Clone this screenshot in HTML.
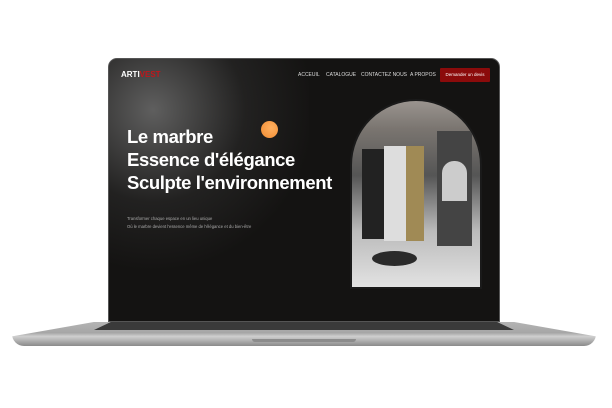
<html><head><style>
body{margin:0;width:612px;height:408px;background:#fff;position:relative;overflow:hidden;font-family:"Liberation Sans",sans-serif}
.scr{position:absolute;left:108px;top:58px;width:392px;height:264px;border-radius:9px 9px 0 0;background:#141312;overflow:hidden;border:1px solid #555;box-sizing:border-box}
.glow{position:absolute;left:-60px;top:-40px;width:260px;height:260px;background:radial-gradient(circle at 40% 35%,rgba(120,120,120,.75),rgba(60,60,60,.35) 40%,rgba(20,19,18,0) 70%)}
.logo{position:absolute;left:12px;top:11px;font-weight:bold;font-size:8px;color:#fff}
.nav{position:absolute;top:13px;font-size:5px;color:#ddd}
.btn{position:absolute;left:331px;top:9px;width:50px;height:14px;background:#8b0b0b;color:#fff;font-size:4.5px;text-align:center;line-height:14px;border-radius:1px}
h1{position:absolute;left:18px;top:66px;margin:0;color:#fff;font-size:18.5px;line-height:23px;font-weight:bold;letter-spacing:-.4px}
.sub{position:absolute;left:18px;top:156px;color:#aaa;font-size:4.2px;line-height:8px}
.dot{position:absolute;left:152px;top:62px;width:17px;height:17px;border-radius:50%;background:radial-gradient(circle at 60% 40%,#ffb060,#f08a30)}
.arch{position:absolute;left:241px;top:40px;width:132px;height:190px;border-radius:66px 66px 0 0;border:2px solid #1a1a1a;box-sizing:border-box;overflow:hidden;background:linear-gradient(#9a948f 0,#7a7570 15%,#555 40%,#bbb 70%,#e2e2e2 100%)}
.base{position:absolute;left:12px;top:322px;width:584px;height:24px;border-radius:0 0 12px 12px;background:linear-gradient(#b4b4b4,#a6a6a6 45%,#cfcfcf 60%,#8a8a8a);clip-path:polygon(14% 0,86% 0,100% 60%,100% 100%,0 100%,0 60%)}
.kb{position:absolute;left:94px;top:322px;width:420px;height:8px;background:#3a3a3a;clip-path:polygon(0 100%,4% 0,96% 0,100% 100%)}
.notch{position:absolute;left:252px;top:339px;width:104px;height:3px;border-radius:0 0 4px 4px;background:#8c8c8c}
</style></head><body>
<div class="scr"><div class="glow"></div>
<div class="logo">ARTI<span style="color:#c0161b">VEST</span></div>
<div class="nav" style="left:189px">ACCEUIL</div>
<div class="nav" style="left:217px">CATALOGUE</div>
<div class="nav" style="left:252px">CONTACTEZ NOUS</div>
<div class="nav" style="left:301px">A PROPOS</div>
<div class="btn">Demander un devis</div>
<div class="dot"></div>
<h1>Le marbre<br>Essence d'élégance<br>Sculpte l'environnement</h1>
<div class="sub">Transformer chaque espace en un lieu unique<br>Où le marbre devient l'essence même de l'élégance et du bien-être</div>
<div class="arch">
<div style="position:absolute;left:10px;top:48px;width:22px;height:90px;background:#222"></div>
<div style="position:absolute;left:32px;top:45px;width:22px;height:95px;background:#ddd"></div>
<div style="position:absolute;left:54px;top:45px;width:18px;height:95px;background:#a08a55"></div>
<div style="position:absolute;left:85px;top:30px;width:35px;height:115px;background:#444"></div>
<div style="position:absolute;left:90px;top:60px;width:25px;height:40px;background:#ccc;border-radius:12px 12px 0 0"></div>
<div style="position:absolute;left:20px;top:150px;width:45px;height:15px;border-radius:50%;background:#2a2a2a"></div>
</div>
</div>
<div class="base"></div><div class="kb"></div><div class="notch"></div>
</body></html>
